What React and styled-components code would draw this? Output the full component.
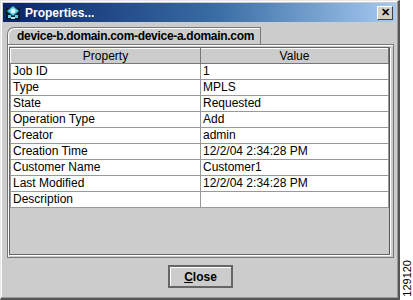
import React from 'react';
import styled, { createGlobalStyle } from 'styled-components';

// Properties dialog (Java Metal look)
const rows = [
  ['Job ID', '1'],
  ['Type', 'MPLS'],
  ['State', 'Requested'],
  ['Operation Type', 'Add'],
  ['Creator', 'admin'],
  ['Creation Time', '12/2/04 2:34:28 PM'],
  ['Customer Name', 'Customer1'],
  ['Last Modified', '12/2/04 2:34:28 PM'],
  ['Description', ''],
];

const GlobalStyle = createGlobalStyle`
  html, body {
    margin: 0;
    padding: 0;
    background: #ffffff;
  }
  body {
    font-family: "Liberation Sans", Arial, sans-serif;
  }
`;

const AppIcon = () => (
  <svg width="16" height="16" viewBox="0 0 16 16">
    <rect x="1" y="3" width="14" height="12" fill="#0b1a2e" />
    <path d="M8 1 L14 6 L8 11 L2 6 Z" fill="#5fd0e8" stroke="#1a6f8a" strokeWidth="0.8" />
    <circle cx="8" cy="6" r="2.4" fill="#d8f6ff" />
    <rect x="3" y="10" width="3" height="3" fill="#5fd0e8" />
    <rect x="10" y="10" width="3" height="3" fill="#5fd0e8" />
    <rect x="6" y="12" width="4" height="2" fill="#9fe4f4" />
  </svg>
);

const App = () => {
  return (
    <>
      <GlobalStyle />
      <Page>
        <Window>
          <TitleBar>
            <TitleLeft>
              <AppIcon />
              <TitleText>Properties...</TitleText>
            </TitleLeft>
            <CloseBox>✕</CloseBox>
          </TitleBar>

          <Body>
            <TabStrip>
              <Tab>device-b.domain.com-device-a.domain.com</Tab>
            </TabStrip>

            <TabPanel>
              <ScrollPane>
                <Table>
                  <colgroup>
                    <col style={{ width: 190 }} />
                    <col />
                  </colgroup>
                  <thead>
                    <tr>
                      <HeadCell>Property</HeadCell>
                      <HeadCell>Value</HeadCell>
                    </tr>
                  </thead>
                  <tbody>
                    {rows.map(([k, v]) => (
                      <tr key={k}>
                        <Cell>{k}</Cell>
                        <Cell>{v}</Cell>
                      </tr>
                    ))}
                  </tbody>
                </Table>
              </ScrollPane>
            </TabPanel>

            <Footer>
              <Button>
                <u>C</u>lose
              </Button>
            </Footer>
          </Body>
        </Window>
        <SideLabel>
          <span>129120</span>
        </SideLabel>
      </Page>
    </>
  );
};

const Page = styled.div`
  display: flex;
  width: 413px;
  height: 300px;
  background: #ffffff;
`;

const Window = styled.div`
  width: 400px;
  height: 300px;
  box-sizing: border-box;
  display: flex;
  flex-direction: column;
  background: #cccccc;
  border-top: 1px solid #e8e8e8;
  border-left: 1px solid #e8e8e8;
  border-right: 2px solid #555555;
  border-bottom: 2px solid #555555;
  padding: 2px 2px 1px 2px;
  box-shadow: inset -1px -1px 0 #999999, inset 1px 1px 0 #ffffff;
`;

const TitleBar = styled.div`
  height: 19px;
  display: flex;
  align-items: center;
  justify-content: space-between;
  padding: 0 3px 0 2px;
  background: linear-gradient(to right, #0a246a 0%, #3a6ea5 55%, #a6caf0 100%);
`;

const TitleLeft = styled.div`
  display: flex;
  align-items: center;
  gap: 4px;
`;

const TitleText = styled.span`
  color: #ffffff;
  font-weight: 700;
  font-size: 12px;
`;

const CloseBox = styled.div`
  width: 16px;
  height: 14px;
  box-sizing: border-box;
  display: flex;
  align-items: center;
  justify-content: center;
  background: #d4d0c8;
  border-top: 1px solid #ffffff;
  border-left: 1px solid #ffffff;
  border-right: 1px solid #404040;
  border-bottom: 1px solid #404040;
  font-size: 11px;
  font-weight: 700;
  color: #000000;
  line-height: 1;
`;

const Body = styled.div`
  flex: 1;
  display: flex;
  flex-direction: column;
  padding: 5px 2px 0 4px;
`;

const TabStrip = styled.div`
  display: flex;
  height: 17px;
`;

const Tab = styled.div`
  height: 17px;
  box-sizing: border-box;
  padding: 1px 6px 0 9px;
  background: #cccccc;
  border-top: 1px solid #777777;
  border-left: 1px solid #777777;
  border-right: 1px solid #777777;
  border-top-left-radius: 7px;
  box-shadow: inset 1px 1px 0 #ffffff;
  font-weight: 700;
  font-size: 12px;
  letter-spacing: -0.3px;
  line-height: 15px;
  color: #000000;
  white-space: nowrap;
`;

const TabPanel = styled.div`
  height: 214px;
  box-sizing: border-box;
  border: 1px solid #777777;
  box-shadow: inset 1px 1px 0 #ffffff;
  padding: 2px 3px 2px 1px;
`;

const ScrollPane = styled.div`
  height: 100%;
  box-sizing: border-box;
  border: 1px solid #666666;
  border-right-color: #555555;
  box-shadow: 1px 1px 0 #ffffff;
  background: #cccccc;
`;

const Table = styled.table`
  width: 100%;
  border-collapse: collapse;
  table-layout: fixed;
  font-size: 12px;
  color: #000000;
`;

const HeadCell = styled.th`
  height: 14px;
  padding: 0;
  font-weight: 400;
  text-align: center;
  background: #cccccc;
  border-left: 1px solid #ffffff;
  border-top: 1px solid #ffffff;
  border-right: 1px solid #777777;
  border-bottom: 1px solid #777777;
  line-height: 13px;
`;

const Cell = styled.td`
  height: 15px;
  padding: 0 0 0 2px;
  background: #ffffff;
  border: 1px solid #999999;
  border-top: none;
  line-height: 15px;
  white-space: nowrap;
  overflow: hidden;
`;

const Footer = styled.div`
  flex: 1;
  display: flex;
  align-items: center;
  justify-content: center;
  padding-bottom: 3px;
`;

const Button = styled.div`
  width: 65px;
  height: 23px;
  box-sizing: border-box;
  display: flex;
  align-items: center;
  justify-content: center;
  background: #cccccc;
  border: 2px solid #666666;
  box-shadow: inset 1px 1px 0 #ffffff;
  font-weight: 700;
  font-size: 12px;
  color: #000000;
  padding-top: 1px;
`;

const SideLabel = styled.div`
  flex: 1;
  display: flex;
  align-items: flex-end;
  justify-content: center;
  padding-bottom: 3px;

  span {
    writing-mode: vertical-rl;
    transform: rotate(180deg);
    font-size: 11px;
    color: #000000;
  }
`;

export default App;
